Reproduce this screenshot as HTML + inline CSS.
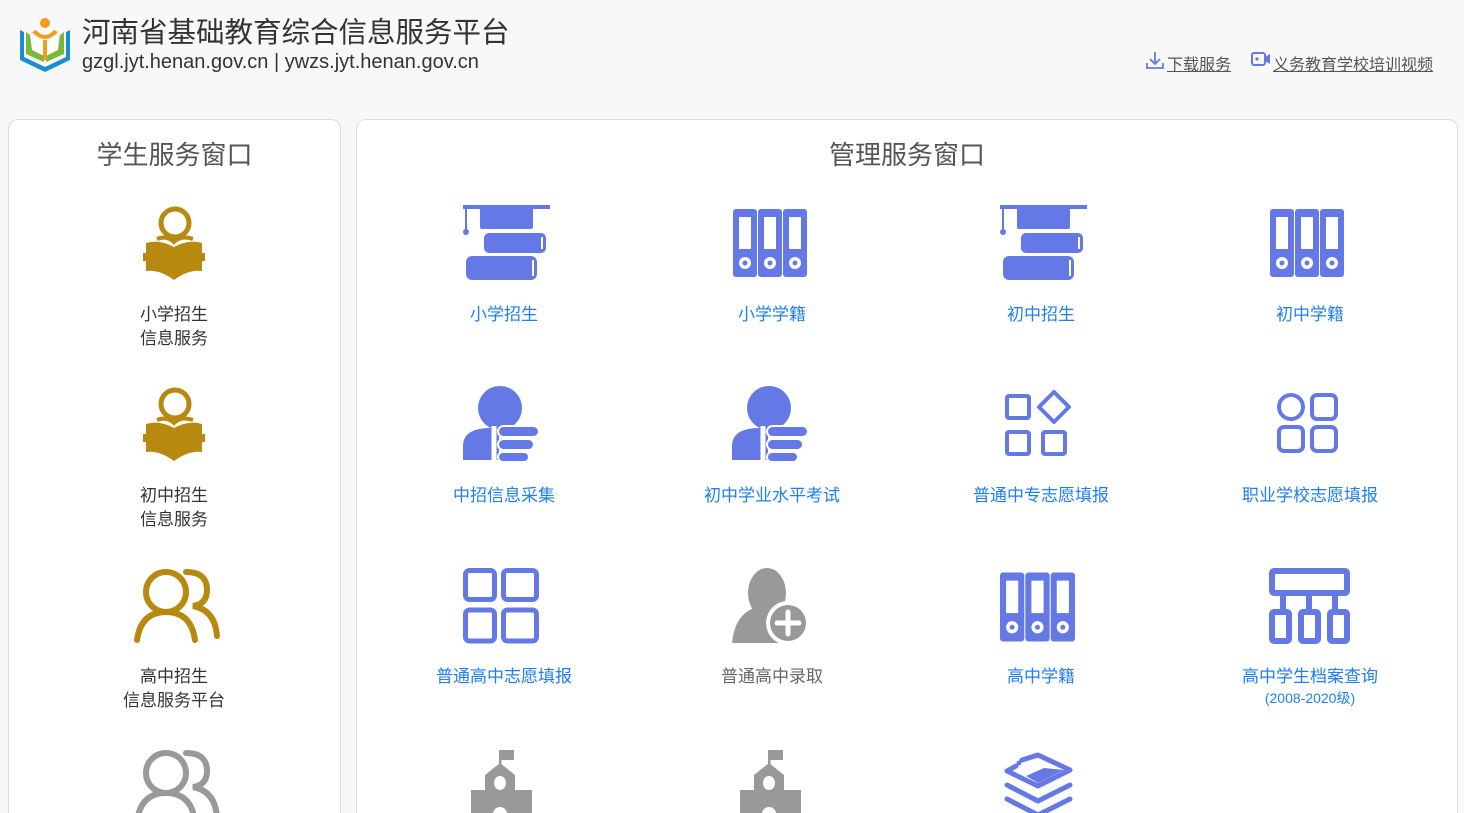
<!DOCTYPE html>
<html><head><meta charset="utf-8">
<style>
*{margin:0;padding:0;box-sizing:border-box}
html,body{width:1464px;height:813px;overflow:hidden}
body{background:#f8f8f8;font-family:"Liberation Sans","Noto Sans CJK SC",sans-serif;position:relative}
.abs{position:absolute}
.panel{position:absolute;background:#fff;border:1px solid #dcdcdc;border-radius:10px}
.pt{position:absolute;font-size:26px;color:#555;text-align:center;width:100%;top:15px}
.lbl{position:absolute;width:240px;text-align:center;font-size:17px;line-height:24px;color:#1f7ff2}
.gl{color:#333}
.gr{color:#666}
svg{position:absolute;overflow:visible}
</style></head><body>

<!-- logo -->
<svg style="left:18px;top:16px" width="54" height="58" viewBox="0 0 54 58">
<path d="M2 14 L2 44 L27 56 L52 44 L52 14 L48 16 L48 41 L27 51 L6 41 L6 16Z" fill="#1a8fd0"/>
<path d="M8 16 L8 38 L26 46 L26 30 Z" fill="#7ab83a"/>
<path d="M46 16 L46 38 L28 46 L28 30 Z" fill="#7ab83a"/>
<path d="M12 18 L26 27 L26 40 L14 34Z" fill="#fff"/>
<path d="M42 18 L28 27 L28 40 L40 34Z" fill="#fff"/>
<path d="M14 16 Q27 30 40 16 L36 14 Q27 24 18 14Z M25 24 L29 24 L29 44 L25 44Z" fill="#f39c1f"/>
<circle cx="27" cy="7" r="5" fill="#f39c1f"/>
</svg>
<div class="abs" style="left:82px;top:15px;font-size:28.5px;color:#333;line-height:36px">河南省基础教育综合信息服务平台</div>
<div class="abs" style="left:82px;top:51px;font-size:20px;color:#333;line-height:23px">gzgl.jyt.henan.gov.cn | ywzs.jyt.henan.gov.cn</div>

<svg style="left:1146px;top:51px" width="18" height="18" viewBox="0 0 18 18"><path d="M9 1 V13 M4 8 L9 13 L14 8 M1 12 V17 H17 V12" stroke="#6579e6" stroke-width="1.8" fill="none"/></svg>
<div class="abs" style="left:1167px;top:51px;font-size:16px;color:#555;text-decoration:underline">下载服务</div>
<svg style="left:1251px;top:52px" width="20" height="15" viewBox="0 0 20 15"><rect x="1" y="1" width="13" height="12" rx="2" stroke="#6579e6" stroke-width="2" fill="none"/><circle cx="6" cy="7" r="1.6" fill="#6579e6"/><path d="M14 5 L19 2 V12 L14 9Z" fill="#6579e6"/></svg>
<div class="abs" style="left:1273px;top:51px;font-size:16px;color:#555;text-decoration:underline">义务教育学校培训视频</div>

<div class="panel" style="left:8px;top:119px;width:333px;height:720px"><div class="pt">学生服务窗口</div></div>
<div class="panel" style="left:356px;top:119px;width:1102px;height:720px"><div class="pt">管理服务窗口</div></div>

<!-- left icons -->
<svg style="left:143px;top:205px" width="62" height="76" viewBox="0 0 62 76">
<circle cx="32" cy="18" r="14" stroke="#b8890f" stroke-width="5" fill="none"/>
<path d="M14 34 Q24 30 31 37 Q38 30 50 34" stroke="#b8890f" stroke-width="4" fill="none"/>
<path d="M3 38 Q16 34 31 42 Q46 34 59 38 L59 48 L62 48 L62 56 L59 56 L59 66 Q46 64 31 75 Q16 64 3 66 L3 56 L0 56 L0 48 L3 48Z" fill="#b8890f"/>
</svg>
<div class="lbl gl" style="left:54px;top:303px">小学招生<br>信息服务</div>
<svg style="left:143px;top:386px" width="62" height="76" viewBox="0 0 62 76">
<circle cx="32" cy="18" r="14" stroke="#b8890f" stroke-width="5" fill="none"/>
<path d="M14 34 Q24 30 31 37 Q38 30 50 34" stroke="#b8890f" stroke-width="4" fill="none"/>
<path d="M3 38 Q16 34 31 42 Q46 34 59 38 L59 48 L62 48 L62 56 L59 56 L59 66 Q46 64 31 75 Q16 64 3 66 L3 56 L0 56 L0 48 L3 48Z" fill="#b8890f"/>
</svg>
<div class="lbl gl" style="left:54px;top:484px">初中招生<br>信息服务</div>
<svg style="left:133px;top:568px" width="90" height="76" viewBox="0 0 90 76">
<circle cx="33" cy="24" r="20" stroke="#b8890f" stroke-width="6" fill="none"/>
<path d="M4 72 Q8 44 33 44 Q58 44 62 72" stroke="#b8890f" stroke-width="6" fill="none" stroke-linecap="round"/>
<path d="M53 4 Q74 4 74 22 Q74 36 60 38 Q82 42 84 68" stroke="#b8890f" stroke-width="6" fill="none" stroke-linecap="round"/>
</svg>
<div class="lbl gl" style="left:54px;top:665px">高中招生<br>信息服务平台</div>
<svg style="left:133px;top:749px" width="90" height="76" viewBox="0 0 90 76">
<circle cx="33" cy="24" r="20" stroke="#999" stroke-width="6" fill="none"/>
<path d="M4 72 Q8 44 33 44 Q58 44 62 72" stroke="#999" stroke-width="6" fill="none" stroke-linecap="round"/>
<path d="M53 4 Q74 4 74 22 Q74 36 60 38 Q82 42 84 68" stroke="#999" stroke-width="6" fill="none" stroke-linecap="round"/>
</svg>

<!-- right row1 -->
<svg style="left:463px;top:205px" width="88" height="76" viewBox="0 0 88 76">
<g fill="#6579e6"><rect x="0" y="0" width="87" height="4"/><path d="M17 4 H70 V22 Q70 24 68 24 H19 Q17 24 17 22Z"/><rect x="2" y="4" width="2" height="22"/><circle cx="3" cy="27" r="3"/>
<rect x="21" y="28" width="62" height="20" rx="5"/><rect x="3" y="51" width="71" height="24" rx="6"/></g>
<rect x="78" y="32" width="2" height="12" fill="#fff"/><rect x="69" y="55" width="2" height="16" fill="#fff"/>
</svg>
<div class="lbl" style="left:384px;top:303px">小学招生</div>
<svg style="left:733px;top:209px" width="75" height="68" viewBox="0 0 75 68">
<g fill="#6579e6"><rect x="0" y="0" width="24" height="68" rx="3"/><rect x="25" y="0" width="24" height="68" rx="3"/><rect x="50" y="0" width="24" height="68" rx="3"/></g>
<g fill="#fff"><rect x="6" y="8" width="12" height="32"/><rect x="31" y="8" width="12" height="32"/><rect x="56" y="8" width="12" height="32"/><circle cx="12" cy="54" r="6"/><circle cx="37" cy="54" r="6"/><circle cx="62" cy="54" r="6"/></g>
<g fill="#6579e6"><circle cx="12" cy="54" r="2.5"/><circle cx="37" cy="54" r="2.5"/><circle cx="62" cy="54" r="2.5"/></g>
</svg>
<div class="lbl" style="left:652px;top:303px">小学学籍</div>
<svg style="left:1000px;top:205px" width="88" height="76" viewBox="0 0 88 76">
<g fill="#6579e6"><rect x="0" y="0" width="87" height="4"/><path d="M17 4 H70 V22 Q70 24 68 24 H19 Q17 24 17 22Z"/><rect x="2" y="4" width="2" height="22"/><circle cx="3" cy="27" r="3"/>
<rect x="21" y="28" width="62" height="20" rx="5"/><rect x="3" y="51" width="71" height="24" rx="6"/></g>
<rect x="78" y="32" width="2" height="12" fill="#fff"/><rect x="69" y="55" width="2" height="16" fill="#fff"/>
</svg>
<div class="lbl" style="left:921px;top:303px">初中招生</div>
<svg style="left:1270px;top:209px" width="75" height="68" viewBox="0 0 75 68">
<g fill="#6579e6"><rect x="0" y="0" width="24" height="68" rx="3"/><rect x="25" y="0" width="24" height="68" rx="3"/><rect x="50" y="0" width="24" height="68" rx="3"/></g>
<g fill="#fff"><rect x="6" y="8" width="12" height="32"/><rect x="31" y="8" width="12" height="32"/><rect x="56" y="8" width="12" height="32"/><circle cx="12" cy="54" r="6"/><circle cx="37" cy="54" r="6"/><circle cx="62" cy="54" r="6"/></g>
<g fill="#6579e6"><circle cx="12" cy="54" r="2.5"/><circle cx="37" cy="54" r="2.5"/><circle cx="62" cy="54" r="2.5"/></g>
</svg>
<div class="lbl" style="left:1190px;top:303px">初中学籍</div>

<!-- row2 -->
<svg style="left:463px;top:386px" width="76" height="76" viewBox="0 0 76 76">
<g fill="#6579e6"><circle cx="37" cy="22" r="22"/><path d="M0 74 V60 Q0 42 28 42 H36 V74Z"/></g>
<path d="M31 40 V75" stroke="#fff" stroke-width="5"/>
<g fill="#6579e6" stroke="#fff" stroke-width="2"><rect x="35" y="40" width="41" height="11" rx="5.5"/><rect x="35" y="53" width="36" height="11" rx="5.5"/><rect x="35" y="66" width="31" height="10" rx="5"/></g>
</svg>
<div class="lbl" style="left:384px;top:484px">中招信息采集</div>
<svg style="left:732px;top:386px" width="76" height="76" viewBox="0 0 76 76">
<g fill="#6579e6"><circle cx="37" cy="22" r="22"/><path d="M0 74 V60 Q0 42 28 42 H36 V74Z"/></g>
<path d="M31 40 V75" stroke="#fff" stroke-width="5"/>
<g fill="#6579e6" stroke="#fff" stroke-width="2"><rect x="35" y="40" width="41" height="11" rx="5.5"/><rect x="35" y="53" width="36" height="11" rx="5.5"/><rect x="35" y="66" width="31" height="10" rx="5"/></g>
</svg>
<div class="lbl" style="left:652px;top:484px">初中学业水平考试</div>
<svg style="left:1005px;top:390px" width="68" height="68" viewBox="0 0 68 68">
<g stroke="#6579e6" stroke-width="4" fill="none" stroke-linejoin="round"><rect x="2" y="6" width="22" height="22" rx="2"/><path d="M49 2 L64 17 L49 32 L34 17Z"/><rect x="2" y="42" width="22" height="22" rx="2"/><rect x="38" y="42" width="22" height="22" rx="2"/></g>
</svg>
<div class="lbl" style="left:921px;top:484px">普通中专志愿填报</div>
<svg style="left:1277px;top:393px" width="62" height="62" viewBox="0 0 62 62">
<g stroke="#6579e6" stroke-width="4" fill="none"><circle cx="14" cy="14" r="12"/><rect x="35" y="2" width="24" height="24" rx="5"/><rect x="2" y="34" width="24" height="24" rx="5"/><rect x="35" y="34" width="24" height="24" rx="5"/></g>
</svg>
<div class="lbl" style="left:1190px;top:484px">职业学校志愿填报</div>

<!-- row3 -->
<svg style="left:463px;top:568px" width="76" height="76" viewBox="0 0 76 76">
<g stroke="#6579e6" stroke-width="5" fill="none"><rect x="2.5" y="2.5" width="29" height="29" rx="4"/><rect x="40.5" y="2.5" width="33" height="29" rx="4"/><rect x="2.5" y="42" width="29" height="31" rx="4"/><rect x="40.5" y="42" width="33" height="31" rx="4"/></g>
</svg>
<div class="lbl" style="left:384px;top:665px">普通高中志愿填报</div>
<svg style="left:731px;top:567px" width="80" height="78" viewBox="0 0 80 78">
<g fill="#999"><ellipse cx="36" cy="26" rx="19" ry="25"/><path d="M1 76 Q4 46 26 40 L46 40 Q62 44 66 56 L50 76Z"/></g>
<circle cx="57" cy="56" r="22" fill="#fff"/><circle cx="57" cy="56" r="18" fill="#999"/>
<path d="M57 45 V67 M46 56 H68" stroke="#fff" stroke-width="5" stroke-linecap="round"/>
</svg>
<div class="lbl gr" style="left:652px;top:665px">普通高中录取</div>
<svg style="left:1000px;top:572px" width="76" height="70" viewBox="0 0 75 68">
<g fill="#6579e6"><rect x="0" y="0" width="24" height="68" rx="3"/><rect x="25" y="0" width="24" height="68" rx="3"/><rect x="50" y="0" width="24" height="68" rx="3"/></g>
<g fill="#fff"><rect x="6" y="8" width="12" height="32"/><rect x="31" y="8" width="12" height="32"/><rect x="56" y="8" width="12" height="32"/><circle cx="12" cy="54" r="6"/><circle cx="37" cy="54" r="6"/><circle cx="62" cy="54" r="6"/></g>
<g fill="#6579e6"><circle cx="12" cy="54" r="2.5"/><circle cx="37" cy="54" r="2.5"/><circle cx="62" cy="54" r="2.5"/></g>
</svg>
<div class="lbl" style="left:921px;top:665px">高中学籍</div>
<svg style="left:1269px;top:568px" width="82" height="76" viewBox="0 0 82 76">
<g stroke="#6579e6" stroke-width="6" fill="none" stroke-linejoin="round"><rect x="3" y="3" width="75" height="22" rx="2"/><path d="M14 25 V44 M40 25 V44 M66 25 V44"/><rect x="3" y="44" width="17" height="29" rx="2"/><rect x="32" y="44" width="17" height="29" rx="2"/><rect x="61" y="44" width="17" height="29" rx="2"/></g>
</svg>
<div class="lbl" style="left:1190px;top:665px">高中学生档案查询</div>
<div class="lbl" style="left:1190px;top:688px;font-size:14px;line-height:20px">(2008-2020级)</div>

<!-- row4 -->
<svg style="left:470px;top:750px" width="64" height="64" viewBox="0 0 64 64">
<g fill="#999"><rect x="29" y="0" width="2.5" height="16"/><path d="M31 0 H44 V10 H31Z"/><path d="M15 25 L30 13 L45 25 V40 H62 V64 H1 V40 H15Z"/></g>
<g fill="#fff"><ellipse cx="30" cy="33" rx="6" ry="7"/><circle cx="30" cy="64" r="7"/></g>
</svg>
<svg style="left:739px;top:750px" width="64" height="64" viewBox="0 0 64 64">
<g fill="#999"><rect x="29" y="0" width="2.5" height="16"/><path d="M31 0 H44 V10 H31Z"/><path d="M15 25 L30 13 L45 25 V40 H62 V64 H1 V40 H15Z"/></g>
<g fill="#fff"><ellipse cx="30" cy="33" rx="6" ry="7"/><circle cx="30" cy="64" r="7"/></g>
</svg>
<svg style="left:1004px;top:755px" width="70" height="60" viewBox="0 0 70 60">
<g stroke="#6579e6" stroke-width="5" fill="none" stroke-linecap="round" stroke-linejoin="round"><path d="M18 5 L34 0 L66 15 L34 31 L3 16 L12 11"/><path d="M3 30 L34 46 L66 30"/><path d="M3 44 L34 60 L66 44"/></g>
<path d="M40 13 L60 15 L34 28 L22 21Z" fill="#6579e6"/><circle cx="15" cy="8" r="2.5" fill="#6579e6"/>
</svg>

</body></html>
